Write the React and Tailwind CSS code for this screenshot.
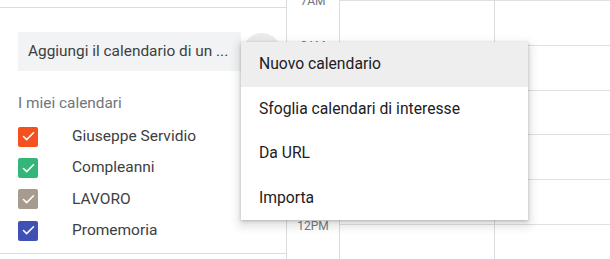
import { Check } from 'lucide-react'

const CALENDARS = [
  { name: 'Giuseppe Servidio', color: 'bg-[#f4511e]' },
  { name: 'Compleanni', color: 'bg-[#33b679]' },
  { name: 'LAVORO', color: 'bg-[#a79b8e]' },
  { name: 'Promemoria', color: 'bg-[#3f51b5]' },
]

const HOURS = ['7AM', '8AM', '9AM', '10AM', '11AM', '12PM']

const MENU = ['Nuovo calendario', 'Sfoglia calendari di interesse', 'Da URL', 'Importa']

export default function App() {
  return (
    <div className="relative h-[259px] w-[610px] overflow-hidden bg-white font-['Roboto',sans-serif]">
      <div className="flex h-full">
        {/* Sidebar */}
        <div className="flex w-[287px] shrink-0 flex-col border-r border-[#dadce0]">
          <div className="h-[7px] shrink-0" />
          <div className="flex h-[247px] flex-col border-y border-[#dadce0] pl-[18px]">
            <div className="mt-[24px] flex items-center">
              <div className="flex h-[39px] w-[223px] items-center bg-[#f1f3f4] pl-[10px] text-[15.4px] text-[#3c4043]">
                Aggiungi il calendario di un ...
              </div>
              <div className="ml-[2px] h-[38px] w-[38px] rounded-full bg-[#ebebeb]" />
            </div>
            <div className="mt-[22px] text-[15.4px] leading-[20px] text-[#70757a]">I miei calendari</div>
            <div className="mt-[8px] flex flex-col">
              {CALENDARS.map(c => (
                <div key={c.name} className="flex h-[31.4px] items-center">
                  <div className={`flex h-[20px] w-[20px] items-center justify-center rounded-[2px] ${c.color}`}>
                    <Check size={15} strokeWidth={2.5} className="text-white" />
                  </div>
                  <span className="ml-[34px] text-[15.5px] text-[#3c4043]">{c.name}</span>
                </div>
              ))}
            </div>
          </div>
        </div>

        {/* Time column */}
        <div className="flex w-[53px] shrink-0 flex-col border-r border-[#dadce0]">
          <div className="-mt-[21.5px] flex flex-col">
            {HOURS.map(h => (
              <div key={h} className="flex h-[45px] items-center justify-center text-[12px] text-[#70757a]">
                {h}
              </div>
            ))}
          </div>
        </div>

        {/* Day grid */}
        <div className="flex flex-1">
          {[0, 1].map(col => (
            <div key={col} className={`flex flex-col ${col === 0 ? 'w-[155px] border-r border-[#dadce0]' : 'flex-1'}`}>
              {HOURS.map(h => (
                <div key={h} className="h-[44.8px] shrink-0 border-t border-[#e0e0e0]" />
              ))}
            </div>
          ))}
        </div>
      </div>

      {/* Dropdown menu */}
      <div className="absolute left-[241px] top-[42px] w-[287px] bg-white shadow-[0_1px_3px_0_rgba(60,64,67,0.3),0_4px_8px_3px_rgba(60,64,67,0.15)]">
        {MENU.map((m, i) => (
          <div
            key={m}
            className={`flex h-[44.5px] items-center pl-[18px] text-[15.7px] text-[#202124] ${i === 0 ? 'bg-[#eeeeee]' : ''}`}
          >
            {m}
          </div>
        ))}
      </div>
    </div>
  )
}
